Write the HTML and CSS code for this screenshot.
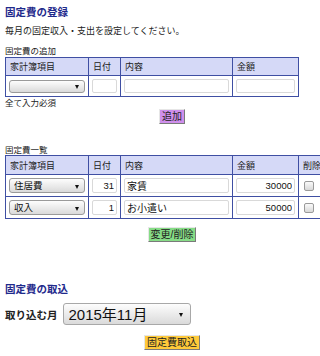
FILE: index.html
```html
<!DOCTYPE html>
<html lang="ja">
<head>
    <meta charset="UTF-8">
    <meta name="viewport" content="width=device-width, initial-scale=1.0">
    <title>固定費の登録</title>
    <link rel="stylesheet" href="styles.css">
</head>
<body>
    <div class="page">
        <h2 class="section-title">固定費の登録</h2>
        <p class="lead">毎月の固定収入・支出を設定してください。</p>

        <p class="caption">固定費の追加</p>
        <table class="grid grid-add">
            <thead>
                <tr>
                    <th class="col-item">家計簿項目</th>
                    <th class="col-day">日付</th>
                    <th class="col-memo">内容</th>
                    <th class="col-amount">金額</th>
                </tr>
            </thead>
            <tbody>
                <tr>
                    <td><div class="select-box"><select class="sel"><option></option></select></div></td>
                    <td><input type="text" class="field"></td>
                    <td><input type="text" class="field"></td>
                    <td><input type="text" class="field"></td>
                </tr>
            </tbody>
        </table>
        <p class="note">全て入力必須</p>
        <div class="actions">
            <button class="btn btn-add">追加</button>
        </div>

        <p class="caption caption-list">固定費一覧</p>
        <table class="grid grid-list">
            <thead>
                <tr>
                    <th class="col-item">家計簿項目</th>
                    <th class="col-day">日付</th>
                    <th class="col-memo">内容</th>
                    <th class="col-amount">金額</th>
                    <th class="col-del">削除</th>
                </tr>
            </thead>
            <tbody>
                <tr>
                    <td><div class="select-box"><select class="sel"><option>住居費</option></select></div></td>
                    <td><input type="text" class="field num" value="31"></td>
                    <td><input type="text" class="field" value="家賃"></td>
                    <td><input type="text" class="field num" value="30000"></td>
                    <td class="del"><input type="checkbox" class="chk"></td>
                </tr>
                <tr>
                    <td><div class="select-box"><select class="sel"><option>収入</option></select></div></td>
                    <td><input type="text" class="field num" value="1"></td>
                    <td><input type="text" class="field" value="お小遣い"></td>
                    <td><input type="text" class="field num" value="50000"></td>
                    <td class="del"><input type="checkbox" class="chk"></td>
                </tr>
            </tbody>
        </table>
        <div class="actions actions-update">
            <button class="btn btn-update">変更/削除</button>
        </div>

        <h2 class="section-title section-import">固定費の取込</h2>
        <div class="import-row">
            <label class="import-label">取り込む月</label>
            <div class="select-box select-large"><select class="sel"><option>2015年11月</option></select></div>
        </div>
        <div class="actions actions-import">
            <button class="btn btn-import">固定費取込</button>
        </div>
    </div>
</body>
</html>
```

FILE: styles.css
```css
:root {
    --navy: #1f2a8c;
    --border: #3f4fa3;
    --head-bg: #d5d9f7;
    --text: #222;
}

html, body {
    margin: 0;
    padding: 0;
    overflow: hidden;
}

body {
    font-family: "Liberation Sans", "Noto Sans CJK JP", sans-serif;
    font-size: 9px;
    color: var(--text);
    background: #fff;
}

.page {
    padding: 5px 5px 0;
}

.section-title {
    margin: 0;
    font-size: 10.5px;
    line-height: 14px;
    font-weight: bold;
    color: var(--navy);
}

.lead {
    margin: 5px 0 0;
    font-size: 9px;
    line-height: 14px;
}

.caption {
    margin: 7px 0 0;
    font-size: 8.5px;
    line-height: 12px;
}

.caption-list {
    margin-top: 21px;
    line-height: 10px;
}

.grid {
    border-collapse: collapse;
    table-layout: fixed;
    font-size: 9px;
}

.grid th,
.grid td {
    box-sizing: border-box;
    border: 1px solid var(--border);
    padding: 3px 3px;
    text-align: left;
}

.grid th {
    background: var(--head-bg);
    font-weight: normal;
    height: 18px;
    padding: 0 0 0 4px;
}

.grid-list th {
    height: 19px;
}

.grid-add {
    width: 293px;
}

.grid-list {
    width: 330px;
}

.col-item { width: 83px; }
.col-day { width: 32px; }
.col-memo { width: 112px; }
.col-amount { width: 66px; }
.col-del { width: 37px; }

.field {
    display: block;
    box-sizing: border-box;
    width: 100%;
    height: 14px;
    margin: 0;
    padding: 0 2px;
    border: 1px solid #d9d9d9;
    border-radius: 2px;
    font: inherit;
    font-size: 10px;
    color: #111;
    background: #fff;
}

.grid-list .field {
    height: 15px;
}

.num {
    text-align: right;
    font-size: 9.5px;
}

.select-box {
    position: relative;
}

.select-box::after {
    content: "";
    position: absolute;
    right: 6px;
    top: 50%;
    margin-top: -1px;
    border-left: 2.5px solid transparent;
    border-right: 2.5px solid transparent;
    border-top: 4px solid #111;
}

.sel {
    display: block;
    box-sizing: border-box;
    width: 100%;
    height: 13px;
    margin: 0;
    padding: 0 4px;
    appearance: none;
    -webkit-appearance: none;
    border: 1px solid #9a9a9a;
    border-radius: 3px;
    background: linear-gradient(#fdfdfd, #dadada);
    font: inherit;
    font-size: 9.5px;
    color: #111;
}

.grid-list .sel {
    height: 15px;
}

.grid .del {
    text-align: left;
    padding-left: 5px;
}

.chk {
    appearance: none;
    -webkit-appearance: none;
    display: block;
    width: 10px;
    height: 10px;
    margin: 0;
    border: 1px solid #9a9a9a;
    border-radius: 2px;
    background: linear-gradient(#fafafa, #d8d8d8);
}

.note {
    margin: 1px 0 0;
    font-size: 8.5px;
    line-height: 10px;
}

.actions {
    display: flex;
    justify-content: center;
    padding-left: 24px;
    margin-top: 1px;
}

.actions-update {
    margin-top: 8px;
}

.actions-import {
    margin-top: 10px;
}

.btn {
    font: inherit;
    font-size: 10px;
    line-height: 11px;
    padding: 1px 2px;
    border: 1px solid;
    border-color: #e6e6e6 #7a7a7a #7a7a7a #e6e6e6;
    color: #222;
    cursor: pointer;
}

.btn-add {
    background: #cf8fec;
}

.btn-update {
    background: #86dc86;
}

.btn-import {
    background: #ffca3a;
}

.section-import {
    margin-top: 40px;
}

.import-row {
    display: flex;
    align-items: center;
    gap: 5px;
    margin-top: 7px;
}

.import-label {
    font-size: 10.5px;
    font-weight: bold;
}

.select-large {
    width: 128px;
}

.select-large .sel {
    height: 22px;
    font-size: 15px;
    padding-left: 5px;
    border-color: #a8a8a8;
}

.select-large::after {
    right: 8px;
}
```
